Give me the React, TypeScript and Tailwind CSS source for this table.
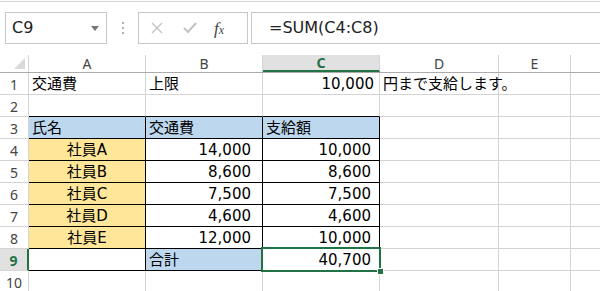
import React from "react";

const cols = "grid grid-cols-[29px_117px_117px_117px_119px_72px_1fr]";
const cellFont = "font-['DejaVu_Sans','Noto_Sans_CJK_JP',sans-serif] text-[15px] text-black";
const hdrFont = "font-['Noto_Sans',sans-serif] text-[14px] text-[#444]";

type Cell = {
  text?: string;
  align?: "left" | "right" | "center";
  cls?: string;
  selected?: boolean;
};

// 行データ（A〜Eの各セル）
const rows: Cell[][] = [
  [
    { text: "交通費" },
    { text: "上限" },
    { text: "10,000", align: "right", cls: "pr-[5px]" },
    { text: "円まで支給します。" },
    {},
  ],
  [{ cls: "border-b-black" }, { cls: "border-b-black" }, { cls: "border-b-black" }, {}, {}],
  [
    { text: "氏名", cls: "bg-[#bdd7ee] border-black" },
    { text: "交通費", cls: "bg-[#bdd7ee] border-black" },
    { text: "支給額", cls: "bg-[#bdd7ee] border-black" },
    {},
    {},
  ],
  ...[
    ["社員A", "14,000", "10,000"],
    ["社員B", "8,600", "8,600"],
    ["社員C", "7,500", "7,500"],
    ["社員D", "4,600", "4,600"],
    ["社員E", "12,000", "10,000"],
  ].map(([name, cost, paid]) => [
    { text: name, align: "center", cls: "bg-[#ffe699] border-black" } as Cell,
    { text: cost, align: "right", cls: "border-black pr-[11px]" } as Cell,
    { text: paid, align: "right", cls: "border-black pr-[8px]" } as Cell,
    {},
    {},
  ]),
  [
    { cls: "border-black" },
    { text: "合計", cls: "bg-[#bdd7ee] border-black" },
    { text: "40,700", align: "right", cls: "border-black pr-[8px] z-10", selected: true },
    {},
    {},
  ],
  [{}, {}, {}, {}, {}],
];

function NameBox() {
  return (
    <div className="flex items-center w-[102px] h-[32px] border border-[#c6c6c6] pl-[6px] pr-[7px]">
      <span className="flex-1 font-['DejaVu_Sans',sans-serif] text-[16px] text-[#222]">C9</span>
      <svg width="8" height="5" viewBox="0 0 8 5">
        <path d="M0 0h8L4 5z" fill="#777" />
      </svg>
    </div>
  );
}

function FormulaBar() {
  return (
    <div className="h-[54px] relative">
      <div className="h-[1px] mt-[1px] bg-[#d6d6d6]" />
      <div className="flex items-center mt-[10px] pl-[5px]">
        <NameBox />
        <div className="w-[31px] flex flex-col items-center gap-[3px]">
          <span className="w-[2px] h-[2px] bg-[#b0b0b0]" />
          <span className="w-[2px] h-[2px] bg-[#b0b0b0]" />
          <span className="w-[2px] h-[2px] bg-[#b0b0b0]" />
        </div>
        <div className="flex items-center w-[110px] h-[32px] border border-[#c6c6c6]">
          <svg className="ml-[12px]" width="12" height="12" viewBox="0 0 12 12">
            <path d="M1 1l10 10M11 1L1 11" stroke="#c4c4c4" strokeWidth="1.4" />
          </svg>
          <svg className="ml-[20px]" width="14" height="12" viewBox="0 0 14 12">
            <path d="M1 6l4 4 8-9" stroke="#c4c4c4" strokeWidth="2.2" fill="none" />
          </svg>
          <span className="ml-[17px] font-['Liberation_Serif',serif] italic text-[17px] text-[#444] leading-none">
            f<span className="text-[12px]">x</span>
          </span>
        </div>
        <div className="flex-1 ml-[3px] h-[32px] border border-r-0 border-[#c6c6c6] flex items-center pl-[17px]">
          <span className="font-['DejaVu_Sans',sans-serif] text-[16px] text-[#222]">=SUM(C4:C8)</span>
        </div>
      </div>
    </div>
  );
}

function ColumnHeader() {
  const letters = ["A", "B", "C", "D", "E", ""];
  return (
    <div className={`${cols} h-[18px] border-b border-[#ababab]`}>
      <div className="relative border-r border-[#d4d4d4]">
        <svg className="absolute right-[3px] bottom-[3px]" width="11" height="11" viewBox="0 0 11 11">
          <path d="M11 0v11H0z" fill="#dadada" />
        </svg>
      </div>
      {letters.map((l, i) =>
        l === "C" ? (
          <div
            key={i}
            className="bg-[#e1e1e1] border-b-2 border-[#217346] flex items-center justify-center font-['Noto_Sans',sans-serif] text-[14px] font-bold text-[#217346] leading-none border-r border-r-[#d4d4d4]"
          >
            C
          </div>
        ) : (
          <div
            key={i}
            className={`flex items-center justify-center leading-none ${hdrFont} ${i < 5 ? "border-r border-[#d4d4d4]" : ""}`}
          >
            {l}
          </div>
        )
      )}
    </div>
  );
}

function Grid() {
  return (
    <div>
      {rows.map((r, ri) => {
        const num = ri + 1;
        const active = num === 9;
        return (
          <div key={ri} className={`${cols} h-[22px] ${active ? "relative z-10" : ""}`}>
            <div
              className={
                active
                  ? "bg-[#e1e1e1] border-r-2 border-r-[#217346] border-b border-b-[#d4d4d4] flex items-end justify-center pb-[2px] font-['Noto_Sans',sans-serif] text-[14px] font-bold text-[#217346] leading-none"
                  : `border-r border-b border-[#d4d4d4] flex items-end justify-center pb-[2px] leading-none ${hdrFont}`
              }
            >
              {num}
            </div>
            {r.map((c, ci) => (
              <div
                key={ci}
                className={`relative border-r border-b border-[#d4d4d4] flex items-end pb-[1px] leading-[18px] whitespace-nowrap ${cellFont} ${
                  c.align === "right" ? "justify-end" : c.align === "center" ? "justify-center" : "pl-[3px]"
                } ${c.cls ?? ""}`}
              >
                {c.text}
                {c.selected && (
                  <div className="absolute -top-[2px] -left-[2px] -right-[2px] -bottom-[2px] border-2 border-[#217346] pointer-events-none">
                    <span className="absolute -right-[5px] -bottom-[5px] w-[7px] h-[7px] bg-[#217346] border border-white" />
                  </div>
                )}
              </div>
            ))}
            <div className="border-b border-[#d4d4d4]" />
          </div>
        );
      })}
    </div>
  );
}

export default function App() {
  return (
    <div className="w-[600px] h-[291px] overflow-hidden bg-white">
      <FormulaBar />
      <ColumnHeader />
      <Grid />
    </div>
  );
}
